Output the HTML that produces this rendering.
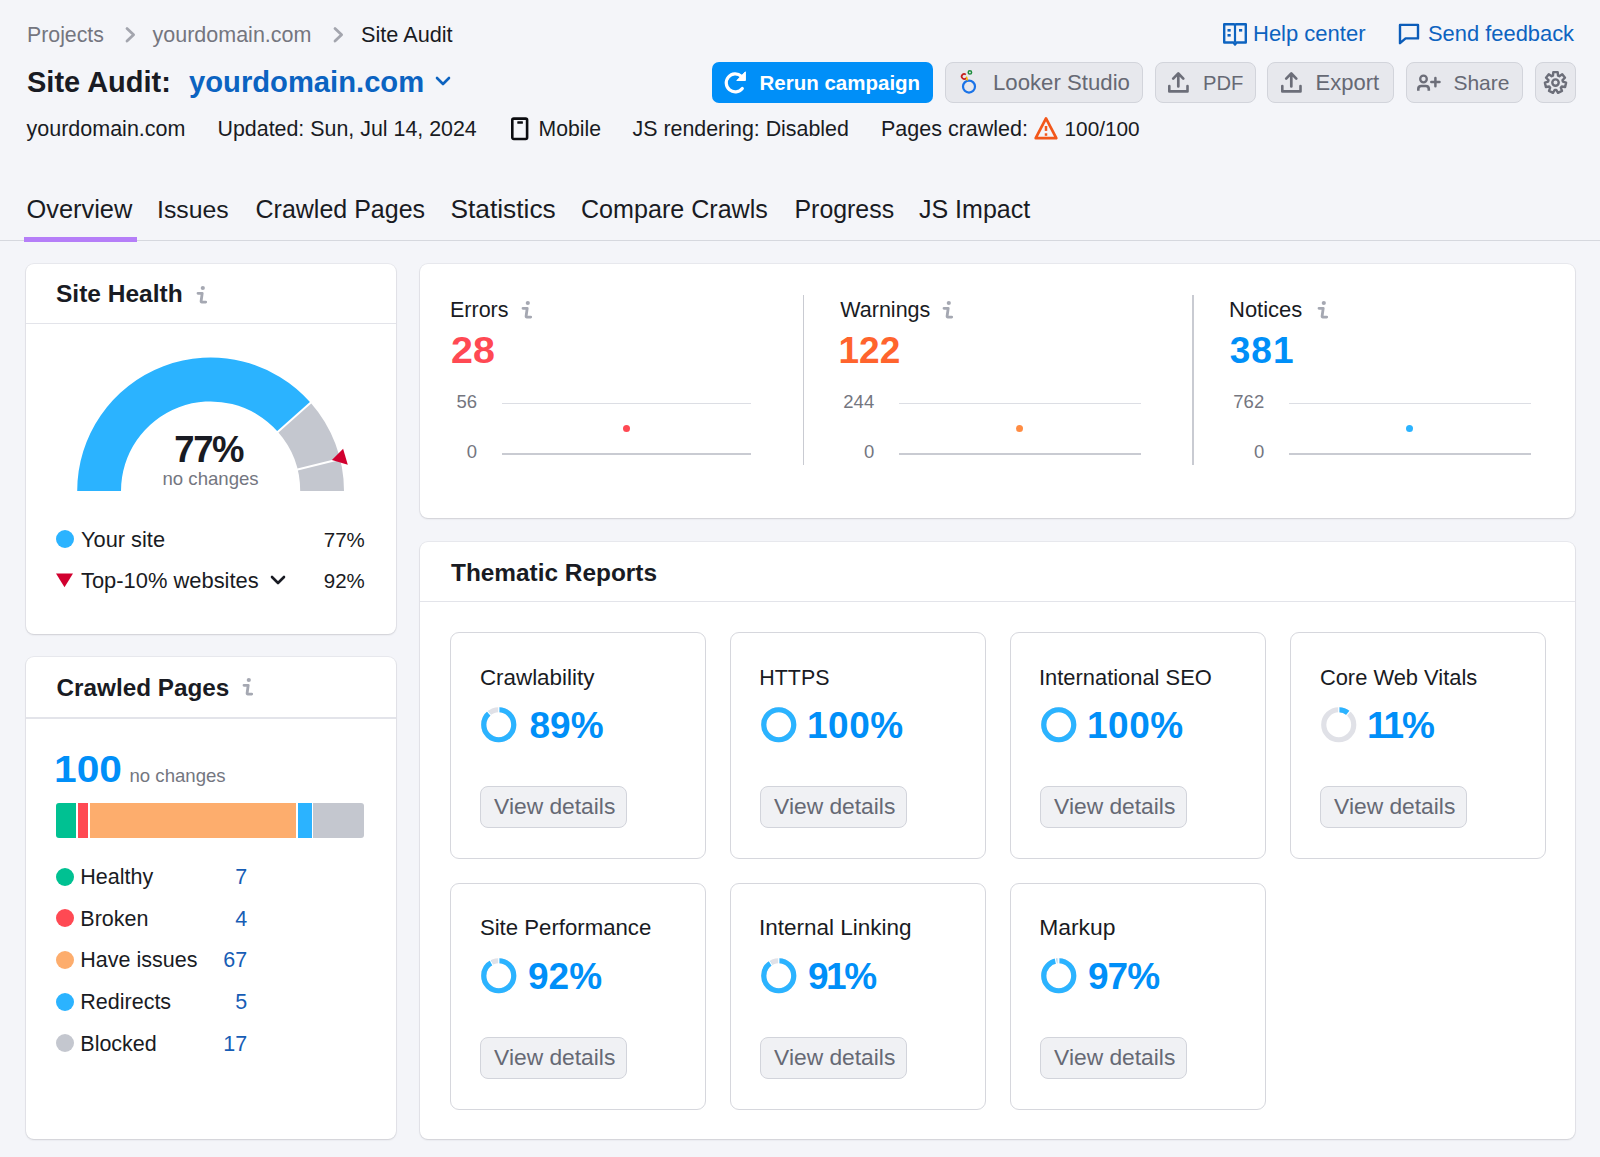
<!DOCTYPE html>
<html><head><meta charset="utf-8">
<style>
*{margin:0;padding:0;box-sizing:border-box}
html,body{width:1600px;height:1157px;overflow:hidden;background:#f4f5f9;font-family:"Liberation Sans",sans-serif;color:#191b23}
.a{position:absolute}
.t{position:absolute;white-space:nowrap;line-height:1}
.card{position:absolute;background:#fff;border-radius:8px;box-shadow:0 0 0 1px rgba(25,27,35,0.05),0 1px 2px rgba(25,27,35,0.12)}
.btn2{position:absolute;background:#e7e8ed;border:1px solid #d2d4db;border-radius:8px}
.ic{position:absolute;overflow:visible}
.vd{position:absolute;background:#f0f1f4;border:1px solid #d2d4db;border-radius:8px}
</style></head><body>
<div class="t" style="left:27px;top:25px;font-size:21.3px;color:#74767f">Projects</div>
<svg class="ic" style="left:120px;top:25px" width="20" height="20" viewBox="0 0 20 20"><path d="M7 3.6 L13.6 9.8 L7 16" fill="none" stroke="#a3a5ae" stroke-width="2.8" stroke-linecap="round" stroke-linejoin="round"/></svg>
<div class="t" style="left:152.5px;top:25px;font-size:21.5px;color:#74767f">yourdomain.com</div>
<svg class="ic" style="left:327.5px;top:25px" width="20" height="20" viewBox="0 0 20 20"><path d="M7 3.6 L13.6 9.8 L7 16" fill="none" stroke="#a3a5ae" stroke-width="2.8" stroke-linecap="round" stroke-linejoin="round"/></svg>
<div class="t" style="left:361px;top:24px;font-size:21.7px;">Site Audit</div>
<div class="t" style="left:27px;top:68px;font-size:29px;font-weight:700">Site Audit:</div>
<div class="t" style="left:189px;top:68px;font-size:29.2px;font-weight:700;color:#0b63c1">yourdomain.com</div>
<svg class="ic" style="left:434px;top:73px" width="18" height="16" viewBox="0 0 18 16"><path d="M3 5 L9 11 L15 5" fill="none" stroke="#0d63c0" stroke-width="2.6" stroke-linecap="round" stroke-linejoin="round"/></svg>
<svg class="ic" style="left:1222px;top:22px" width="26" height="25" viewBox="0 0 26 25"><path d="M2.2 2.2 H12 L13 3.2 L14 2.2 H23.8 V20.5 H14.5 L13 22.5 L11.5 20.5 H2.2 Z" fill="none" stroke="#0d63c0" stroke-width="2.4" stroke-linejoin="round"/><path d="M13 3.5 V20" stroke="#0d63c0" stroke-width="2.2"/><rect x="5.5" y="7" width="3.2" height="2.6" fill="#0d63c0"/><rect x="5.5" y="12" width="3.2" height="2.6" fill="#0d63c0"/><rect x="17" y="7" width="3.2" height="2.6" fill="#0d63c0"/></svg>
<div class="t" style="left:1253px;top:23px;font-size:22px;color:#0d63c0">Help center</div>
<svg class="ic" style="left:1397px;top:22px" width="24" height="24" viewBox="0 0 24 24"><path d="M3 21.2 V2.9 H21 V16.4 H8.6 Z" fill="none" stroke="#0b5cb9" stroke-width="2.4" stroke-linejoin="round"/></svg>
<div class="t" style="left:1428px;top:23px;font-size:21.9px;color:#0d63c0">Send feedback</div>
<div class="a" style="left:712px;top:61.5px;width:221px;height:41px;background:#008ff8;border-radius:7px"></div>
<svg class="ic" style="left:722px;top:69px" width="28" height="28" viewBox="0 0 28 28"><path d="M19.3 7.2 A9 9 0 1 0 20.3 19.5" fill="none" stroke="#fff" stroke-width="3.2" stroke-linecap="round"/><path d="M23.4 2.8 V11.5 H14.8 Z" fill="#fff" stroke="#fff" stroke-width="1" stroke-linejoin="round"/></svg>
<div class="t" style="left:759.5px;top:73px;font-size:20.5px;font-weight:700;color:#fff">Rerun campaign</div>
<div class="btn2" style="left:945px;top:61.5px;width:198px;height:41px"></div>
<svg class="ic" style="left:955px;top:66px" width="28" height="32" viewBox="0 0 28 32"><circle cx="14" cy="20.6" r="6" fill="none" stroke="#1a73e8" stroke-width="2.2"/><path d="M10.81 8.58 A2.5 2.5 0 1 0 11.12 12.11" fill="none" stroke="#c5221f" stroke-width="1.7"/><circle cx="14.9" cy="6.4" r="1.7" fill="none" stroke="#1e8e3e" stroke-width="1.5"/><path d="M11.6 11.2 L12.3 14" stroke="#f4b400" stroke-width="1.5" stroke-linecap="round"/></svg>
<div class="t" style="left:993px;top:72px;font-size:22.2px;color:#666974">Looker Studio</div>
<div class="btn2" style="left:1155px;top:61.5px;width:100.5px;height:41px"></div>
<svg class="ic" style="left:1166px;top:70px" width="24" height="24" viewBox="0 0 24 24"><path d="M3.3 16 V21.4 H21.5 V16" fill="none" stroke="#6c6e79" stroke-width="2.6" stroke-linecap="round" stroke-linejoin="round"/><path d="M12.3 16.5 V4 M7.2 8.6 L12.3 3.4 L17.3 8.6" fill="none" stroke="#6c6e79" stroke-width="2.7" stroke-linecap="round" stroke-linejoin="round"/></svg>
<div class="t" style="left:1203px;top:73px;font-size:20.2px;color:#666974">PDF</div>
<div class="btn2" style="left:1267px;top:61.5px;width:127px;height:41px"></div>
<svg class="ic" style="left:1278.5px;top:70px" width="24" height="24" viewBox="0 0 24 24"><path d="M3.3 16 V21.4 H21.5 V16" fill="none" stroke="#6c6e79" stroke-width="2.6" stroke-linecap="round" stroke-linejoin="round"/><path d="M12.3 16.5 V4 M7.2 8.6 L12.3 3.4 L17.3 8.6" fill="none" stroke="#6c6e79" stroke-width="2.7" stroke-linecap="round" stroke-linejoin="round"/></svg>
<div class="t" style="left:1315.5px;top:72px;font-size:22px;color:#666974">Export</div>
<div class="btn2" style="left:1406px;top:61.5px;width:117px;height:41px"></div>
<svg class="ic" style="left:1413px;top:70px" width="30" height="24" viewBox="0 0 30 24"><circle cx="10.5" cy="9" r="3.3" fill="none" stroke="#6c6e79" stroke-width="2.3"/><path d="M5.3 20.8 V19 Q5.3 16 8.3 16 H12.8 Q15.8 16 15.8 19 V20.8" fill="none" stroke="#6c6e79" stroke-width="2.6"/><path d="M22.4 8 V16.2 M18.3 12.1 H26.5" stroke="#6c6e79" stroke-width="2.5" stroke-linecap="round"/></svg>
<div class="t" style="left:1453.4px;top:72px;font-size:21px;color:#666974">Share</div>
<div class="btn2" style="left:1535px;top:61.5px;width:40.5px;height:41px"></div>
<svg class="ic" style="left:1543px;top:70px" width="25" height="25" viewBox="0 0 25 25"><path d="M9.97 5.55 L10.30 2.13 L14.70 2.13 L15.03 5.55 L16.36 6.19 L19.23 4.31 L21.98 7.76 L19.51 10.14 L19.84 11.58 L23.10 12.66 L22.12 16.96 L18.72 16.51 L17.80 17.67 L18.98 20.89 L15.01 22.80 L13.24 19.86 L11.76 19.86 L9.99 22.80 L6.02 20.89 L7.20 17.67 L6.28 16.51 L2.88 16.96 L1.90 12.66 L5.16 11.58 L5.49 10.14 L3.02 7.76 L5.77 4.31 L8.64 6.19 Z" fill="none" stroke="#6c6e79" stroke-width="2.4" stroke-linejoin="round"/><circle cx="12.5" cy="12.6" r="3.2" fill="none" stroke="#6c6e79" stroke-width="2.4"/></svg>
<div class="t" style="left:26.5px;top:119px;font-size:21.5px;">yourdomain.com</div>
<div class="t" style="left:217.5px;top:119px;font-size:21.4px;">Updated: Sun, Jul 14, 2024</div>
<svg class="ic" style="left:509px;top:116px" width="22" height="25" viewBox="0 0 22 25"><rect x="3.3" y="2.6" width="14.8" height="20.4" rx="1.5" fill="none" stroke="#0b0c10" stroke-width="2.6"/><rect x="8.3" y="5.2" width="5.6" height="2.6" rx="0.6" fill="#0b0c10"/></svg>
<div class="t" style="left:538.5px;top:118px;font-size:21.2px;">Mobile</div>
<div class="t" style="left:632.5px;top:119px;font-size:21.4px;">JS rendering: Disabled</div>
<div class="t" style="left:881px;top:119px;font-size:21.5px;">Pages crawled:</div>
<svg class="ic" style="left:1033px;top:115px" width="26" height="26" viewBox="0 0 26 26"><path d="M13 3.4 L23.3 23.2 H2.7 Z" fill="none" stroke="#f2571b" stroke-width="2.7" stroke-linejoin="round"/><path d="M13 11 V15.9" stroke="#f2571b" stroke-width="2.5"/><rect x="11.75" y="18.3" width="2.5" height="2.5" fill="#f2571b"/></svg>
<div class="t" style="left:1064.5px;top:119px;font-size:20.8px;">100/100</div>
<div class="a" style="left:0;top:239.5px;width:1600px;height:1.5px;background:#d6d8de"></div>
<div class="a" style="left:24px;top:237px;width:113px;height:5px;background:#b57ef8"></div>
<div class="t" style="left:26.5px;top:197px;font-size:25.4px;">Overview</div>
<div class="t" style="left:157px;top:198px;font-size:24.8px;">Issues</div>
<div class="t" style="left:255.5px;top:197px;font-size:25px;">Crawled Pages</div>
<div class="t" style="left:450.5px;top:196px;font-size:26.3px;">Statistics</div>
<div class="t" style="left:581px;top:197px;font-size:25.1px;">Compare Crawls</div>
<div class="t" style="left:794.5px;top:197px;font-size:24.9px;">Progress</div>
<div class="t" style="left:919px;top:197px;font-size:25px;">JS Impact</div>
<div class="card" style="left:26.3px;top:264.2px;width:369.5px;height:370px"></div>
<div class="a" style="left:26.3px;top:322.5px;width:369.5px;height:1.5px;background:#e3e4ea"></div>
<div class="t" style="left:56px;top:282px;font-size:24.5px;font-weight:700">Site Health</div>
<svg class="ic" style="left:196px;top:285px" width="12" height="20" viewBox="0 0 12 20"><circle cx="6.8" cy="3" r="2.1" fill="#a5a8b2"/><path d="M2 8.3 H6.2 L5.1 16.3 Q5 17.1 5.8 17.1 H9.7" fill="none" stroke="#a5a8b2" stroke-width="2.8" stroke-linecap="round" stroke-linejoin="round"/></svg>
<svg class="a" style="left:0;top:0" width="400" height="640" viewBox="0 0 400 640">
<path d="M77.2 491.0 A133.4 133.4 0 0 1 310.66 402.78 L277.81 431.75 A89.6 89.6 0 0 0 121.0 491.0 Z" fill="#2bb3ff"/>
<path d="M310.66 402.78 A133.4 133.4 0 0 1 344.0 491.0 L300.2 491.0 A89.6 89.6 0 0 0 277.81 431.75 Z" fill="#c4c7cf"/>
<path d="M277.06 432.41 L311.41 402.12" stroke="#fff" stroke-width="2"/>
<path d="M296.61 469.72 L341.06 458.71" stroke="#fff" stroke-width="2"/>
<path d="M331.9 460 L343.1 448.8 L347.8 464.7 Z" fill="#d1002f"/>
</svg>
<div class="t" style="left:174.3px;top:432px;font-size:36.5px;font-weight:700;letter-spacing:-1.4px">77%</div>
<div class="t" style="left:162.5px;top:470px;font-size:18.6px;color:#74767f">no changes</div>
<div class="a" style="left:55.6px;top:530.4px;width:18px;height:18px;border-radius:50%;background:#2bb3ff"></div>
<div class="t" style="left:81px;top:529px;font-size:21.8px;">Your site</div>
<div class="t" style="right:1235.2px;top:530px;font-size:20.5px;">77%</div>
<svg class="ic" style="left:55px;top:572px" width="20" height="18" viewBox="0 0 20 18"><path d="M1 1.4 H18 L9.5 15.2 Z" fill="#d1002f"/></svg>
<div class="t" style="left:81px;top:570px;font-size:21.9px;">Top-10% websites</div>
<svg class="ic" style="left:269px;top:573px" width="18" height="14" viewBox="0 0 18 14"><path d="M3 4 L9 10 L15 4" fill="none" stroke="#191b23" stroke-width="2.6" stroke-linecap="round" stroke-linejoin="round"/></svg>
<div class="t" style="right:1235.2px;top:571px;font-size:20.5px;">92%</div>
<div class="card" style="left:26.3px;top:657.2px;width:369.5px;height:482px"></div>
<div class="a" style="left:26.3px;top:717.3px;width:369.5px;height:1.5px;background:#e3e4ea"></div>
<div class="t" style="left:56.5px;top:676px;font-size:24.3px;font-weight:700">Crawled Pages</div>
<svg class="ic" style="left:242px;top:676.5px" width="12" height="20" viewBox="0 0 12 20"><circle cx="6.8" cy="3" r="2.1" fill="#a5a8b2"/><path d="M2 8.3 H6.2 L5.1 16.3 Q5 17.1 5.8 17.1 H9.7" fill="none" stroke="#a5a8b2" stroke-width="2.8" stroke-linecap="round" stroke-linejoin="round"/></svg>
<div class="t" style="left:53.7px;top:751px;font-size:37px;font-weight:700;color:#008ff8;transform:scaleX(1.1);transform-origin:0 0">100</div>
<div class="t" style="left:129.5px;top:767px;font-size:18.6px;color:#74767f">no changes</div>
<div class="a" style="left:56px;top:802.6px;width:308px;height:35px;border-radius:3px;overflow:hidden;background:#fff">
<div class="a" style="left:0;top:0;width:20px;height:35px;background:#00c192"></div>
<div class="a" style="left:22px;top:0;width:10.2px;height:35px;background:#ff4953"></div>
<div class="a" style="left:34px;top:0;width:206.4px;height:35px;background:#fdad6d"></div>
<div class="a" style="left:242px;top:0;width:13.8px;height:35px;background:#2bb3ff"></div>
<div class="a" style="left:257.4px;top:0;width:51px;height:35px;background:#c4c7cf"></div>
</div>
<div class="a" style="left:55.6px;top:867.8px;width:18px;height:18px;border-radius:50%;background:#00c192"></div>
<div class="t" style="left:80.3px;top:867px;font-size:21.5px;">Healthy</div>
<div class="t" style="right:1352.8px;top:867px;font-size:21.5px;color:#175db5">7</div>
<div class="a" style="left:55.6px;top:909.4px;width:18px;height:18px;border-radius:50%;background:#ff4953"></div>
<div class="t" style="left:80.3px;top:909px;font-size:21.5px;">Broken</div>
<div class="t" style="right:1352.8px;top:909px;font-size:21.5px;color:#175db5">4</div>
<div class="a" style="left:55.6px;top:951.1px;width:18px;height:18px;border-radius:50%;background:#fdad6d"></div>
<div class="t" style="left:80.3px;top:950px;font-size:21.5px;">Have issues</div>
<div class="t" style="right:1352.8px;top:950px;font-size:21.5px;color:#175db5">67</div>
<div class="a" style="left:55.6px;top:992.8px;width:18px;height:18px;border-radius:50%;background:#2bb3ff"></div>
<div class="t" style="left:80.3px;top:992px;font-size:21.5px;">Redirects</div>
<div class="t" style="right:1352.8px;top:992px;font-size:21.5px;color:#175db5">5</div>
<div class="a" style="left:55.6px;top:1034.4px;width:18px;height:18px;border-radius:50%;background:#c4c7cf"></div>
<div class="t" style="left:80.3px;top:1034px;font-size:21.5px;">Blocked</div>
<div class="t" style="right:1352.8px;top:1034px;font-size:21.5px;color:#175db5">17</div>
<div class="card" style="left:419.8px;top:264.2px;width:1155px;height:253.6px"></div>
<div class="t" style="left:450px;top:300px;font-size:21.5px;">Errors</div>
<svg class="ic" style="left:521px;top:299.5px" width="12" height="20" viewBox="0 0 12 20"><circle cx="6.8" cy="3" r="2.1" fill="#a5a8b2"/><path d="M2 8.3 H6.2 L5.1 16.3 Q5 17.1 5.8 17.1 H9.7" fill="none" stroke="#a5a8b2" stroke-width="2.8" stroke-linecap="round" stroke-linejoin="round"/></svg>
<div class="t" style="left:450.5px;top:332px;font-size:37px;font-weight:700;color:#ff4953;letter-spacing:0px;transform:scaleX(1.065);transform-origin:0 0">28</div>
<div class="t" style="right:1123px;top:393px;font-size:18.5px;color:#74767f">56</div>
<div class="t" style="right:1123px;top:443px;font-size:18.5px;color:#74767f">0</div>
<div class="a" style="left:501.5px;top:403px;width:249.5px;height:1px;background:#dcdee4"></div>
<div class="a" style="left:501.5px;top:452.5px;width:249.5px;height:2px;background:#c9cbd2"></div>
<div class="a" style="left:622.6px;top:424.5px;width:7.2px;height:7.2px;border-radius:50%;background:#ff4953"></div>
<div class="t" style="left:840.3px;top:300px;font-size:21.5px;">Warnings</div>
<svg class="ic" style="left:942px;top:299.5px" width="12" height="20" viewBox="0 0 12 20"><circle cx="6.8" cy="3" r="2.1" fill="#a5a8b2"/><path d="M2 8.3 H6.2 L5.1 16.3 Q5 17.1 5.8 17.1 H9.7" fill="none" stroke="#a5a8b2" stroke-width="2.8" stroke-linecap="round" stroke-linejoin="round"/></svg>
<div class="t" style="left:838.5px;top:332px;font-size:37px;font-weight:700;color:#ff642d;letter-spacing:0px">122</div>
<div class="t" style="right:725.8px;top:393px;font-size:18.5px;color:#74767f">244</div>
<div class="t" style="right:725.8px;top:443px;font-size:18.5px;color:#74767f">0</div>
<div class="a" style="left:899.4px;top:403px;width:241.6px;height:1px;background:#dcdee4"></div>
<div class="a" style="left:899.4px;top:452.5px;width:241.6px;height:2px;background:#c9cbd2"></div>
<div class="a" style="left:1015.7px;top:424.5px;width:7.2px;height:7.2px;border-radius:50%;background:#ff8c43"></div>
<div class="t" style="left:1229px;top:299px;font-size:22px;">Notices</div>
<svg class="ic" style="left:1316.5px;top:299.5px" width="12" height="20" viewBox="0 0 12 20"><circle cx="6.8" cy="3" r="2.1" fill="#a5a8b2"/><path d="M2 8.3 H6.2 L5.1 16.3 Q5 17.1 5.8 17.1 H9.7" fill="none" stroke="#a5a8b2" stroke-width="2.8" stroke-linecap="round" stroke-linejoin="round"/></svg>
<div class="t" style="left:1229.8px;top:332px;font-size:37px;font-weight:700;color:#008ff8;letter-spacing:1px">381</div>
<div class="t" style="right:335.8px;top:393px;font-size:18.5px;color:#74767f">762</div>
<div class="t" style="right:335.8px;top:443px;font-size:18.5px;color:#74767f">0</div>
<div class="a" style="left:1288.7px;top:403px;width:242.0px;height:1px;background:#dcdee4"></div>
<div class="a" style="left:1288.7px;top:452.5px;width:242.0px;height:2px;background:#c9cbd2"></div>
<div class="a" style="left:1406.2px;top:424.5px;width:7.2px;height:7.2px;border-radius:50%;background:#2bb3ff"></div>
<div class="a" style="left:802.5px;top:295px;width:1.5px;height:170px;background:#c9cbd2"></div>
<div class="a" style="left:1192.2px;top:295px;width:1.5px;height:170px;background:#c9cbd2"></div>
<div class="card" style="left:419.8px;top:541.8px;width:1155px;height:597.4px"></div>
<div class="a" style="left:419.8px;top:600.5px;width:1155px;height:1.5px;background:#e3e4ea"></div>
<div class="t" style="left:451px;top:561px;font-size:24.4px;font-weight:700">Thematic Reports</div>
<div class="a" style="left:449.5px;top:632.3px;width:256px;height:226.5px;border:1px solid #d6d7dd;border-radius:9px;background:#fff"></div>
<div class="t" style="left:479.9px;top:667px;font-size:22.4px;">Crawlability</div>
<svg class="ic" style="left:480.7px;top:707.0px" width="35.5" height="35.5" viewBox="0 0 35.5 35.5"><circle cx="17.75" cy="17.75" r="15" fill="none" stroke="#e0e1e7" stroke-width="5.2"/><circle cx="17.75" cy="17.75" r="15" fill="none" stroke="#2bb3ff" stroke-width="5.2" stroke-dasharray="83.88 94.25" transform="rotate(-90 17.75 17.75)"/><path d="M17.75 6.25 L17.75 -0.75" stroke="#fff" stroke-width="1.3"/><path d="M10.42 8.89 L5.96 3.50" stroke="#fff" stroke-width="1.3"/></svg>
<div class="t" style="left:529.5px;top:707px;font-size:37px;font-weight:700;color:#008ff8;letter-spacing:0px">89%</div>
<div class="vd" style="left:480.0px;top:786.3px;width:147px;height:41.5px"></div>
<div class="t" style="left:494.1px;top:795px;font-size:22.8px;color:#666974">View details</div>
<div class="a" style="left:729.5px;top:632.3px;width:256px;height:226.5px;border:1px solid #d6d7dd;border-radius:9px;background:#fff"></div>
<div class="t" style="left:759.3px;top:668px;font-size:21.4px;">HTTPS</div>
<svg class="ic" style="left:760.7px;top:707.0px" width="35.5" height="35.5" viewBox="0 0 35.5 35.5"><circle cx="17.75" cy="17.75" r="15" fill="none" stroke="#e0e1e7" stroke-width="5.2"/><circle cx="17.75" cy="17.75" r="15" fill="none" stroke="#2bb3ff" stroke-width="5.2" stroke-dasharray="94.25 94.25" transform="rotate(-90 17.75 17.75)"/></svg>
<div class="t" style="left:807.0px;top:707px;font-size:37px;font-weight:700;color:#008ff8;letter-spacing:0.5px">100%</div>
<div class="vd" style="left:760.0px;top:786.3px;width:147px;height:41.5px"></div>
<div class="t" style="left:774.1px;top:795px;font-size:22.8px;color:#666974">View details</div>
<div class="a" style="left:1009.5px;top:632.3px;width:256px;height:226.5px;border:1px solid #d6d7dd;border-radius:9px;background:#fff"></div>
<div class="t" style="left:1039.0px;top:667px;font-size:21.9px;">International SEO</div>
<svg class="ic" style="left:1040.7px;top:707.0px" width="35.5" height="35.5" viewBox="0 0 35.5 35.5"><circle cx="17.75" cy="17.75" r="15" fill="none" stroke="#e0e1e7" stroke-width="5.2"/><circle cx="17.75" cy="17.75" r="15" fill="none" stroke="#2bb3ff" stroke-width="5.2" stroke-dasharray="94.25 94.25" transform="rotate(-90 17.75 17.75)"/></svg>
<div class="t" style="left:1087.0px;top:707px;font-size:37px;font-weight:700;color:#008ff8;letter-spacing:0.5px">100%</div>
<div class="vd" style="left:1040.0px;top:786.3px;width:147px;height:41.5px"></div>
<div class="t" style="left:1054.1px;top:795px;font-size:22.8px;color:#666974">View details</div>
<div class="a" style="left:1289.5px;top:632.3px;width:256px;height:226.5px;border:1px solid #d6d7dd;border-radius:9px;background:#fff"></div>
<div class="t" style="left:1319.9px;top:667px;font-size:21.9px;">Core Web Vitals</div>
<svg class="ic" style="left:1320.7px;top:707.0px" width="35.5" height="35.5" viewBox="0 0 35.5 35.5"><circle cx="17.75" cy="17.75" r="15" fill="none" stroke="#e0e1e7" stroke-width="5.2"/><circle cx="17.75" cy="17.75" r="15" fill="none" stroke="#2bb3ff" stroke-width="5.2" stroke-dasharray="10.37 94.25" transform="rotate(-90 17.75 17.75)"/><path d="M17.75 6.25 L17.75 -0.75" stroke="#fff" stroke-width="1.3"/><path d="M25.08 8.89 L29.54 3.50" stroke="#fff" stroke-width="1.3"/></svg>
<div class="t" style="left:1367.0px;top:707px;font-size:37px;font-weight:700;color:#008ff8;letter-spacing:-2px">11%</div>
<div class="vd" style="left:1320.0px;top:786.3px;width:147px;height:41.5px"></div>
<div class="t" style="left:1334.1px;top:795px;font-size:22.8px;color:#666974">View details</div>
<div class="a" style="left:449.5px;top:883.1px;width:256px;height:226.5px;border:1px solid #d6d7dd;border-radius:9px;background:#fff"></div>
<div class="t" style="left:479.9px;top:917px;font-size:22.2px;">Site Performance</div>
<svg class="ic" style="left:480.7px;top:957.8px" width="35.5" height="35.5" viewBox="0 0 35.5 35.5"><circle cx="17.75" cy="17.75" r="15" fill="none" stroke="#e0e1e7" stroke-width="5.2"/><circle cx="17.75" cy="17.75" r="15" fill="none" stroke="#2bb3ff" stroke-width="5.2" stroke-dasharray="86.71 94.25" transform="rotate(-90 17.75 17.75)"/><path d="M17.75 6.25 L17.75 -0.75" stroke="#fff" stroke-width="1.3"/><path d="M12.21 7.67 L8.84 1.54" stroke="#fff" stroke-width="1.3"/></svg>
<div class="t" style="left:528.0px;top:958px;font-size:37px;font-weight:700;color:#008ff8;letter-spacing:0px">92%</div>
<div class="vd" style="left:480.0px;top:1037.1px;width:147px;height:41.5px"></div>
<div class="t" style="left:494.1px;top:1046px;font-size:22.8px;color:#666974">View details</div>
<div class="a" style="left:729.5px;top:883.1px;width:256px;height:226.5px;border:1px solid #d6d7dd;border-radius:9px;background:#fff"></div>
<div class="t" style="left:759.0px;top:917px;font-size:22.5px;">Internal Linking</div>
<svg class="ic" style="left:760.7px;top:957.8px" width="35.5" height="35.5" viewBox="0 0 35.5 35.5"><circle cx="17.75" cy="17.75" r="15" fill="none" stroke="#e0e1e7" stroke-width="5.2"/><circle cx="17.75" cy="17.75" r="15" fill="none" stroke="#2bb3ff" stroke-width="5.2" stroke-dasharray="85.77 94.25" transform="rotate(-90 17.75 17.75)"/><path d="M17.75 6.25 L17.75 -0.75" stroke="#fff" stroke-width="1.3"/><path d="M11.59 8.04 L7.84 2.13" stroke="#fff" stroke-width="1.3"/></svg>
<div class="t" style="left:808.0px;top:958px;font-size:37px;font-weight:700;color:#008ff8;letter-spacing:-2.5px">91%</div>
<div class="vd" style="left:760.0px;top:1037.1px;width:147px;height:41.5px"></div>
<div class="t" style="left:774.1px;top:1046px;font-size:22.8px;color:#666974">View details</div>
<div class="a" style="left:1009.5px;top:883.1px;width:256px;height:226.5px;border:1px solid #d6d7dd;border-radius:9px;background:#fff"></div>
<div class="t" style="left:1039.2px;top:916px;font-size:22.9px;">Markup</div>
<svg class="ic" style="left:1040.7px;top:957.8px" width="35.5" height="35.5" viewBox="0 0 35.5 35.5"><circle cx="17.75" cy="17.75" r="15" fill="none" stroke="#e0e1e7" stroke-width="5.2"/><circle cx="17.75" cy="17.75" r="15" fill="none" stroke="#2bb3ff" stroke-width="5.2" stroke-dasharray="91.42 94.25" transform="rotate(-90 17.75 17.75)"/><path d="M17.75 6.25 L17.75 -0.75" stroke="#fff" stroke-width="1.3"/><path d="M15.60 6.45 L14.28 -0.42" stroke="#fff" stroke-width="1.3"/></svg>
<div class="t" style="left:1088.0px;top:958px;font-size:37px;font-weight:700;color:#008ff8;letter-spacing:-1px">97%</div>
<div class="vd" style="left:1040.0px;top:1037.1px;width:147px;height:41.5px"></div>
<div class="t" style="left:1054.1px;top:1046px;font-size:22.8px;color:#666974">View details</div>
</body></html>
